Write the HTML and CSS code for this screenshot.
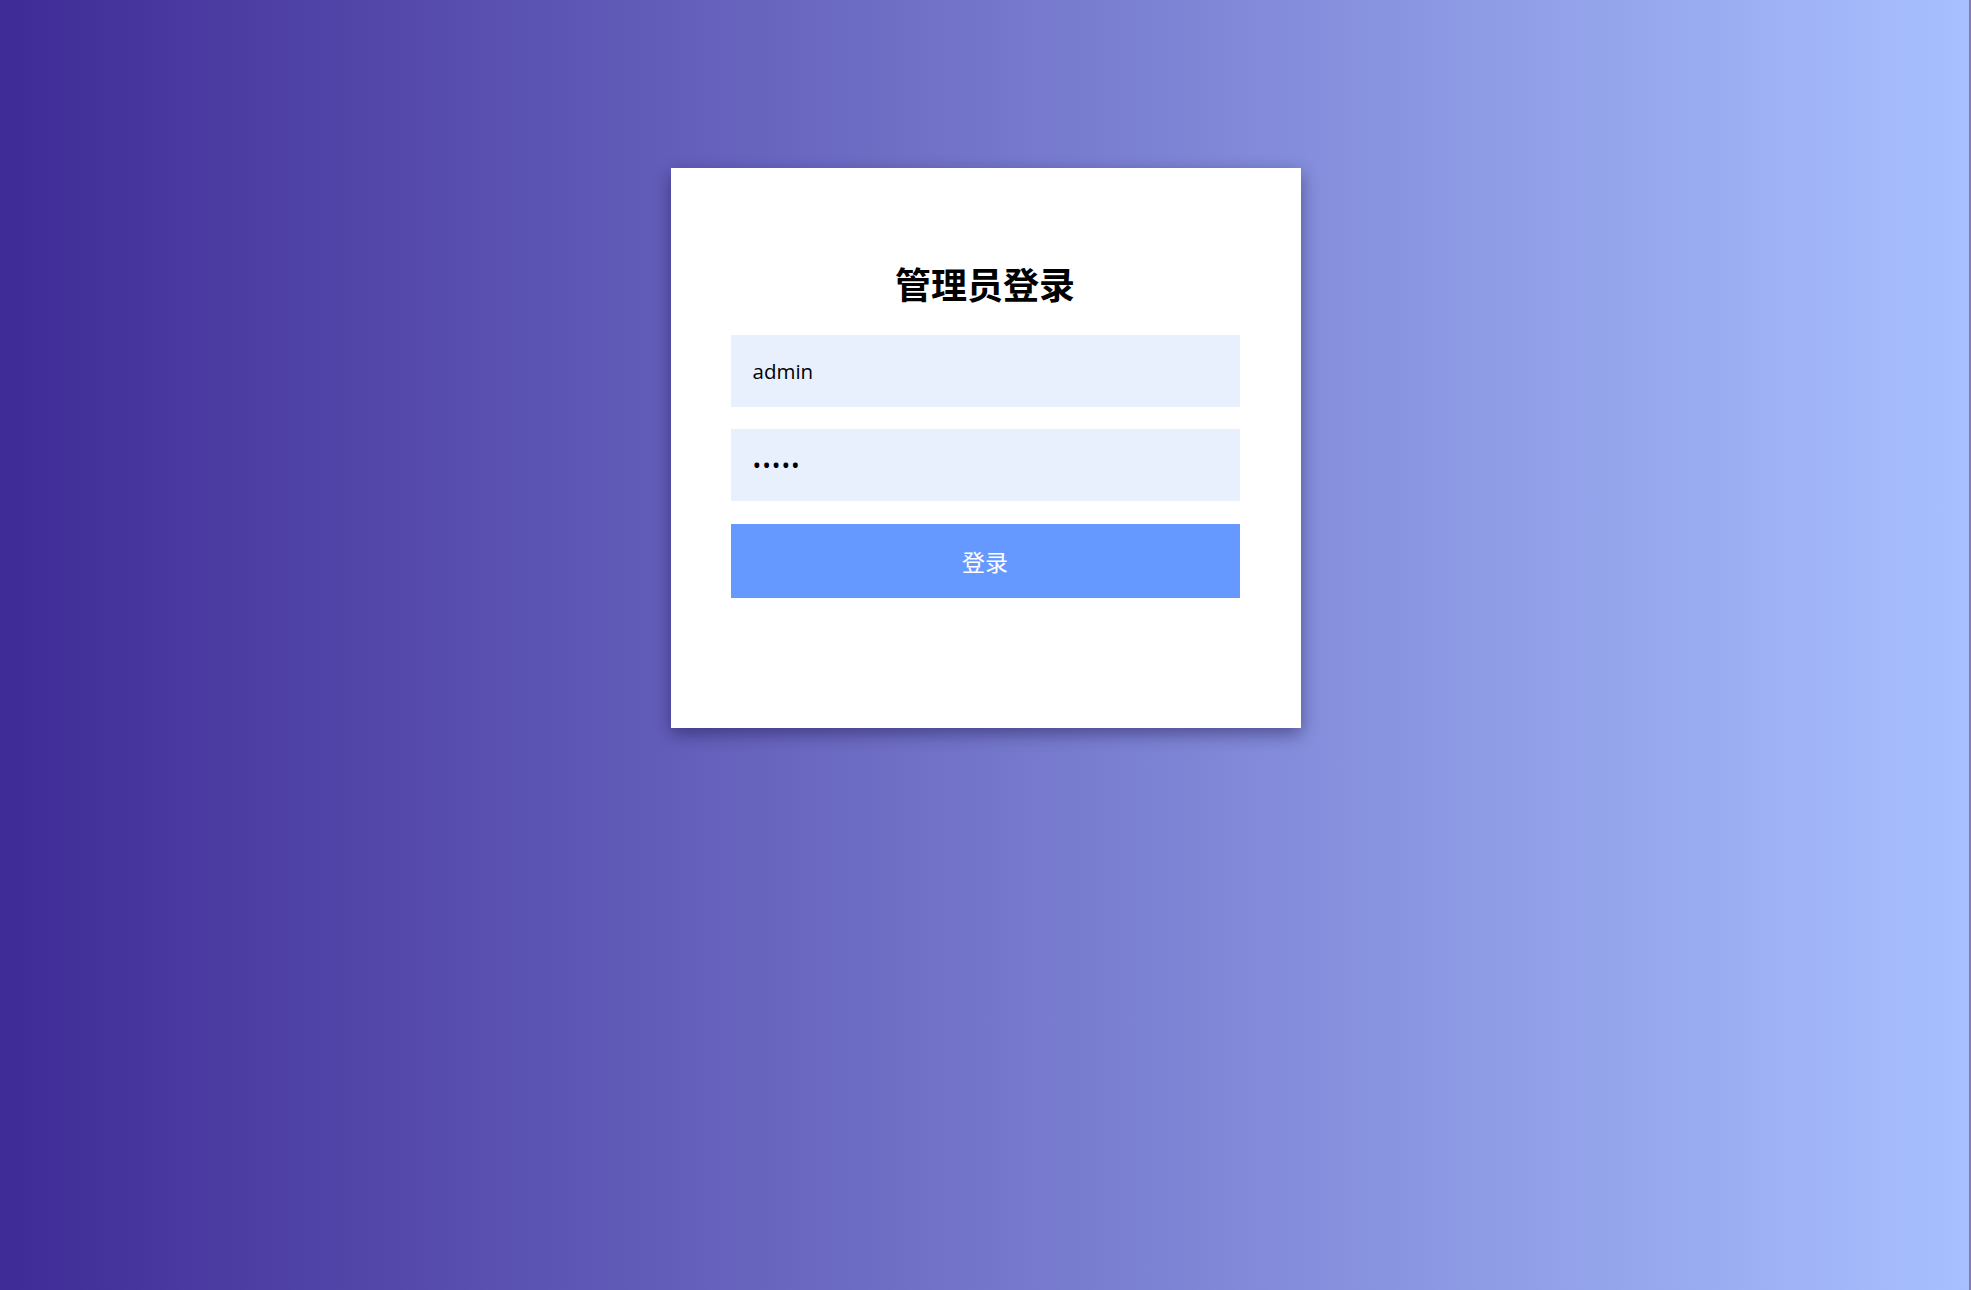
FILE: index.html
```html
<!DOCTYPE html>
<html lang="zh-CN">
<head>
<meta charset="utf-8">
<title>管理员登录</title>
<link rel="stylesheet" href="styles.css">
</head>
<body>
<div class="page">
  <form class="card" onsubmit="return false">
    <h2 class="title">管理员登录</h2>
    <input class="field" type="text" value="admin" autofocus>
    <input class="field pwd" type="password" value="admin">
    <button class="submit" type="submit">登录</button>
  </form>
</div>
</body>
</html>
```
FILE: styles.css
```css
html, body {
  margin: 0;
  padding: 0;
  height: 100%;
}
body {
  background: linear-gradient(to right, #3f2b96, #a8c0ff);
  font-family: "Open Sans", "Noto Sans CJK SC", sans-serif;
  overflow: hidden;
}
.page {
  height: 100%;
  display: flex;
  justify-content: center;
  align-items: flex-start;
  padding-top: 168px;
  box-sizing: border-box;
  position: relative;
}
.page::after {
  content: "";
  position: absolute;
  top: 0;
  right: 0;
  width: 2px;
  height: 100%;
  background: #8d7aa6;
}
.card {
  width: 630px;
  height: 560px;
  box-sizing: border-box;
  background: #fff;
  padding: 97px 61px 0 60px;
  display: flex;
  flex-direction: column;
  box-shadow: 0 6px 16px rgba(20, 10, 60, 0.45);
}
.title {
  margin: 0 0 34px;
  font-family: "Noto Sans CJK SC", sans-serif;
  font-size: 36px;
  line-height: 36px;
  font-weight: 700;
  color: #000;
  text-align: center;
}
.field {
  display: block;
  width: 100%;
  height: 72px;
  box-sizing: border-box;
  border: none;
  outline: none;
  margin: 0 0 22px;
  padding: 0 22px;
  background: #e8f0fe;
  font-family: "Open Sans", "Noto Sans CJK SC", sans-serif;
  font-size: 20.5px;
  color: #000;
  caret-color: #000;
}
.pwd {
  margin-bottom: 23px;
  font-size: 23px;
  letter-spacing: 1px;
}
.submit {
  display: block;
  width: 100%;
  height: 74px;
  border: none;
  margin: 0;
  padding: 0;
  background: #6699ff;
  color: #fff;
  font-family: "Noto Sans CJK SC", sans-serif;
  font-size: 23px;
  cursor: pointer;
}
```
